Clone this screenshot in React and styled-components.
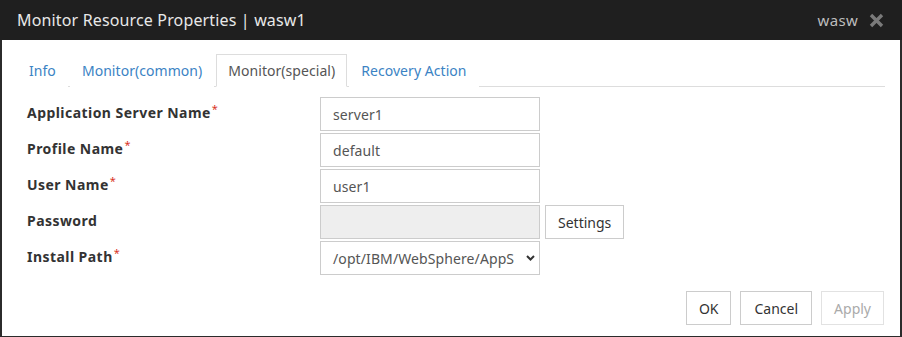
import styled, { createGlobalStyle } from "styled-components";

/* --- --- --- */

const Global = createGlobalStyle`
  html, body {
    margin: 0;
    padding: 0;
    background: #fff;
  }
  body {
    font-family: "Noto Sans", "Liberation Sans", sans-serif;
    font-size: 14px;
    color: #333;
  }
`;

const Dialog = styled.div`
  width: 902px;
  height: 337px;
  box-sizing: border-box;
  display: flex;
  flex-direction: column;
  background: #fff;
  border-left: 2px solid #2b2b2b;
  border-right: 2px solid #2b2b2b;
  border-bottom: 1px solid #2b2b2b;
`;

const Header = styled.div`
  height: 40px;
  flex: 0 0 40px;
  display: flex;
  align-items: center;
  justify-content: space-between;
  background: #1f1f1f;
  margin: 0 -2px;
  padding: 0 18px 0 17px;
`;

const Title = styled.div`
  color: #e8e8e8;
  font-size: 16px;
  letter-spacing: 0.15px;
`;

const HeadRight = styled.div`
  display: flex;
  align-items: center;
  gap: 11px;
  color: #bdbdbd;
  font-size: 15px;
  letter-spacing: 0.3px;
`;

const Body = styled.div`
  flex: 1;
  display: flex;
  flex-direction: column;
  padding: 14px 15px 11px 15px;
`;

const Tabs = styled.ul`
  display: flex;
  margin: 0;
  padding: 0;
  list-style: none;
  border-bottom: 1px solid #ddd;
  height: 32px;
`;

const Tab = styled.li`
  display: flex;
  align-items: center;
  padding: 0 11px;
  margin-right: 2px;
  margin-bottom: -1px;
  border: 1px solid ${(p) => (p.$active ? "#ddd" : "transparent")};
  border-bottom-color: ${(p) => (p.$active ? "#fff" : "transparent")};
  background: #fff;
  color: ${(p) => (p.$active ? "#555" : "#3b83c4")};
  font-size: 14px;
  letter-spacing: 0.05px;
`;

const Form = styled.div`
  display: flex;
  flex-direction: column;
  gap: 2px;
  margin-top: 10px;
  padding-left: 10px;
`;

const Row = styled.div`
  display: grid;
  grid-template-columns: 293px 220px auto;
  height: 34px;
  align-items: center;
`;

const Label = styled.div`
  font-weight: bold;
  color: #333;
  font-size: 14px;
  letter-spacing: 0.45px;
  margin-top: -4px;
`;

const Star = styled.sup`
  color: #d9351f;
  font-weight: normal;
  font-size: 11px;
  margin-left: 1px;
  vertical-align: 5px;
  line-height: 0;
`;

const Field = styled.div`
  box-sizing: border-box;
  height: 34px;
  display: flex;
  align-items: center;
  justify-content: space-between;
  padding: 0 4px 0 12px;
  border: 1px solid #ccc;
  background: ${(p) => (p.$disabled ? "#eee" : "#fff")};
  color: #555;
  font-size: 14px;
  letter-spacing: 0.1px;
  white-space: nowrap;
  overflow: hidden;
`;

const Button = styled.button`
  box-sizing: border-box;
  height: 34px;
  padding: 0 ${(p) => p.$pad || 12}px;
  border: 1px solid ${(p) => (p.$disabled ? "#e2e2e2" : "#ccc")};
  background: #fff;
  color: ${(p) => (p.$disabled ? "#aaa" : "#333")};
  font-family: inherit;
  font-size: 14px;
  cursor: pointer;
`;

const Side = styled.div`
  padding-left: 5px;
`;

const Footer = styled.div`
  margin-top: auto;
  display: flex;
  justify-content: flex-end;
  gap: 9px;
  padding-right: 1px;
`;

/* --- --- --- */

function Close() {
  return (
    <svg width="15" height="15" viewBox="0 0 15 15">
      <path d="M2 2 L13 13 M13 2 L2 13" stroke="#7a7a7a" strokeWidth="3.4" />
    </svg>
  );
}

function Chevron() {
  return (
    <svg width="9" height="6" viewBox="0 0 9 6">
      <path d="M1 1 L4.5 4.5 L8 1" stroke="#333" strokeWidth="2" fill="none" />
    </svg>
  );
}

const fields = [
  { label: "Application Server Name", required: true, value: "server1" },
  { label: "Profile Name", required: true, value: "default" },
  { label: "User Name", required: true, value: "user1" },
  { label: "Password", value: "", disabled: true, button: "Settings" },
  { label: "Install Path", required: true, value: "/opt/IBM/WebSphere/AppS", select: true },
];

const tabs = ["Info", "Monitor(common)", "Monitor(special)", "Recovery Action"];

export default function App() {
  return (
    <>
      <Global />
      <Dialog>
        <Header>
          <Title>Monitor Resource Properties | wasw1</Title>
          <HeadRight>
            <span>wasw</span>
            <Close />
          </HeadRight>
        </Header>
        <Body>
          <Tabs>
            {tabs.map((t) => (
              <Tab key={t} $active={t === "Monitor(special)"}>
                {t}
              </Tab>
            ))}
          </Tabs>
          <Form>
            {fields.map((f) => (
              <Row key={f.label}>
                <Label>
                  {f.label}
                  {f.required && <Star>*</Star>}
                </Label>
                <Field $disabled={f.disabled}>
                  <span>{f.value}</span>
                  {f.select && <Chevron />}
                </Field>
                <Side>{f.button && <Button>{f.button}</Button>}</Side>
              </Row>
            ))}
          </Form>
          <Footer>
            <Button>OK</Button>
            <Button $pad={13}>Cancel</Button>
            <Button $disabled>Apply</Button>
          </Footer>
        </Body>
      </Dialog>
    </>
  );
}
